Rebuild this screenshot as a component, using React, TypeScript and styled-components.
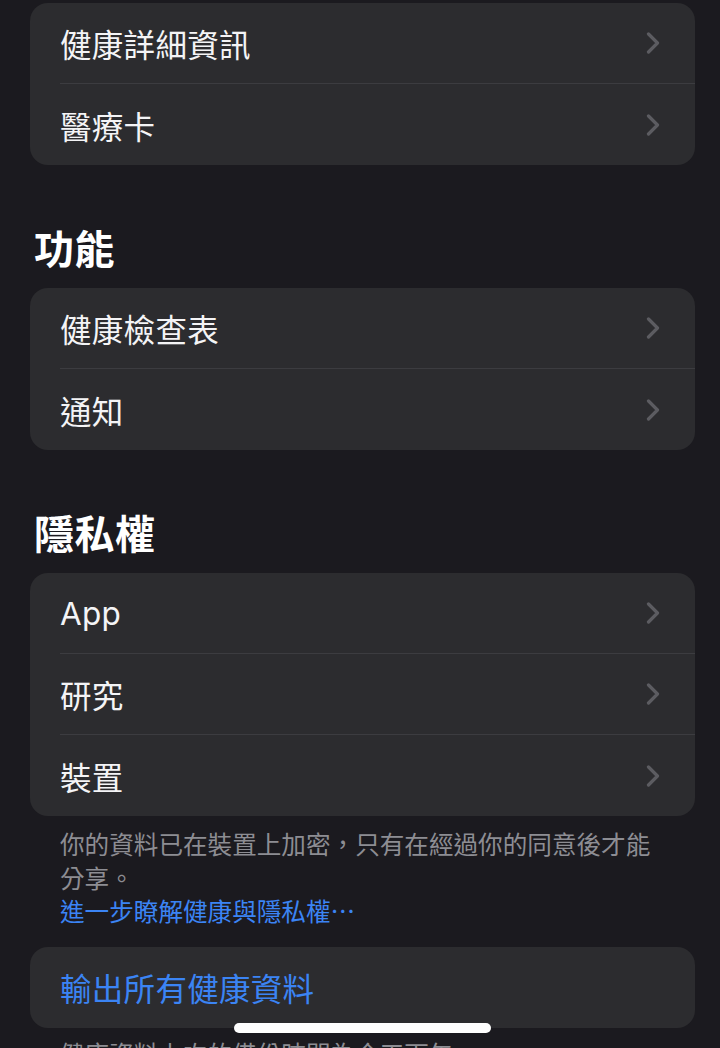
import styled, { createGlobalStyle } from "styled-components";

const GlobalStyle = createGlobalStyle`
  html, body {
    margin: 0;
    padding: 0;
    background: #1b1a1f;
  }
  body {
    font-family: Inter, "Noto Sans CJK TC", "Noto Sans", sans-serif;
    -webkit-font-smoothing: antialiased;
  }
`;

const Screen = styled.div`
  position: relative;
  width: 720px;
  height: 1048px;
  overflow: hidden;
  background: #1b1a1f;
`;

const Content = styled.div`
  display: flex;
  flex-direction: column;
  padding: 3px 25px 0 30px;
`;

const SectionTitle = styled.h2`
  margin: 61px 0 14px 4px;
  height: 48px;
  line-height: 48px;
  font-size: 40px;
  font-weight: 700;
  color: #ffffff;
  letter-spacing: 0.5px;
`;

const Card = styled.div<{ $gapTop?: number }>`
  display: flex;
  flex-direction: column;
  margin-top: ${(p) => p.$gapTop ?? 0}px;
  background: #2c2c2f;
  border-radius: 18px;
  overflow: hidden;
`;

const Row = styled.div`
  display: flex;
  padding-left: 30px;
  height: 81px;
`;

const RowBody = styled.div<{ $last?: boolean }>`
  flex: 1;
  display: flex;
  align-items: center;
  justify-content: space-between;
  padding-right: 35px;
  border-bottom: ${(p) => (p.$last ? "none" : "1px solid #3c3c40")};
`;

const RowLabel = styled.span<{ $accent?: boolean }>`
  font-size: 31.5px;
  color: ${(p) => (p.$accent ? "#3b84f4" : "#f4f4f6")};
  letter-spacing: 0.3px;
`;

const Footnote = styled.div<{ $top?: number }>`
  padding: ${(p) => p.$top ?? 13}px 0 0 30px;
  width: 600px;
  font-size: 24.6px;
  line-height: 33.5px;
  color: #8d8d93;
`;

const FootLink = styled.div`
  color: #3b84f4;
`;

const HomeIndicator = styled.div`
  position: absolute;
  left: 234px;
  top: 1023px;
  width: 257px;
  height: 10px;
  border-radius: 5px;
  background: #ffffff;
`;

const Chevron = () => (
  <svg width="14" height="22" viewBox="0 0 14 22" fill="none">
    <path
      d="M2.5 2 L11.5 11 L2.5 20"
      stroke="#5c5c61"
      strokeWidth="3.2"
      strokeLinecap="round"
      strokeLinejoin="round"
    />
  </svg>
);

type Item = { label: string; accent?: boolean; chevron?: boolean };

const Group = ({ items, gapTop }: { items: Item[]; gapTop?: number }) => (
  <Card $gapTop={gapTop}>
    {items.map((it, i) => (
      <Row key={it.label}>
        <RowBody $last={i === items.length - 1}>
          <RowLabel $accent={it.accent}>{it.label}</RowLabel>
          {it.chevron !== false && <Chevron />}
        </RowBody>
      </Row>
    ))}
  </Card>
);

export default function App() {
  return (
    <Screen>
      <GlobalStyle />
      <Content>
        <Group items={[{ label: "健康詳細資訊" }, { label: "醫療卡" }]} />

        <SectionTitle>功能</SectionTitle>
        <Group items={[{ label: "健康檢查表" }, { label: "通知" }]} />

        <SectionTitle>隱私權</SectionTitle>
        <Group items={[{ label: "App" }, { label: "研究" }, { label: "裝置" }]} />

        <Footnote>
          你的資料已在裝置上加密，只有在經過你的同意後才能分享。
          <FootLink>進一步瞭解健康與隱私權⋯</FootLink>
        </Footnote>

        <Group
          gapTop={17}
          items={[{ label: "輸出所有健康資料", accent: true, chevron: false }]}
        />

        <Footnote $top={11}>健康資料上次的備份時間為今天下午</Footnote>
      </Content>
      <HomeIndicator />
    </Screen>
  );
}
